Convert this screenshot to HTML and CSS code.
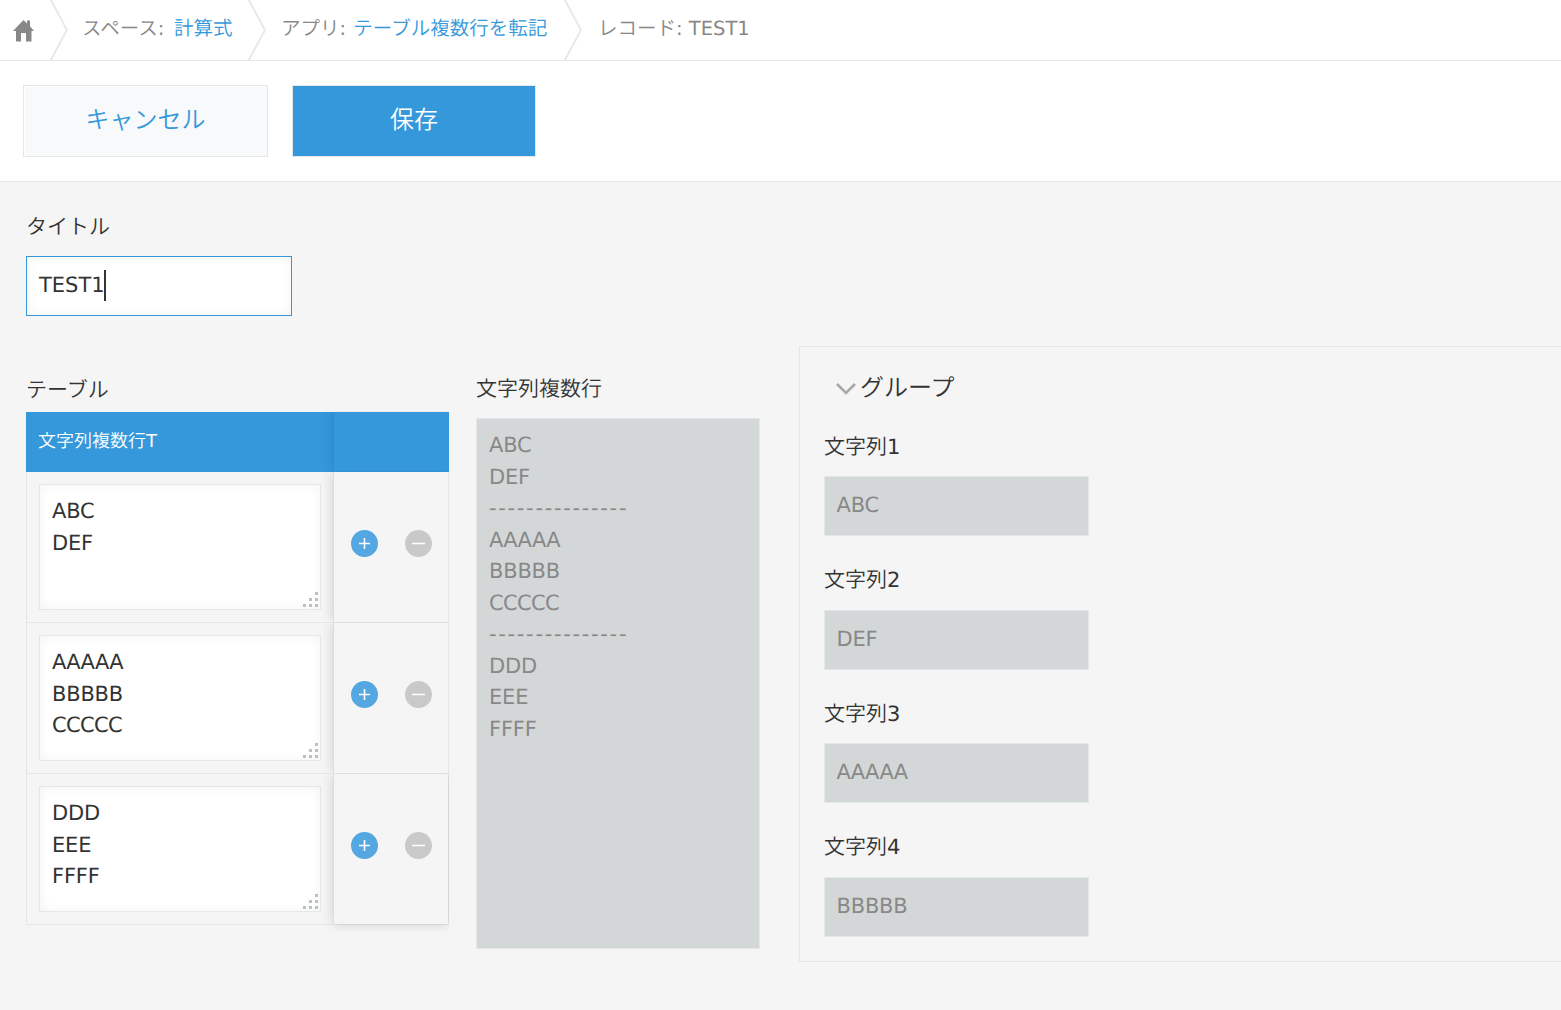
FILE: index.html
```html
<!DOCTYPE html>
<html lang="ja">
<head>
<meta charset="utf-8">
<title>レコード: TEST1</title>
<link rel="stylesheet" href="styles.css">
</head>
<body>
<svg class="defs" aria-hidden="true">
  <symbol id="sep" viewBox="0 0 20 60"><path d="M0.300 -1L17 30L0.300 61" fill="none" stroke="#e6eae9" stroke-width="2"/></symbol>
  <symbol id="plus" viewBox="0 0 28 28"><circle cx="13.500" cy="13.500" r="13.500" fill="#54a7e0"/><path d="M8 13.500h11M13.500 8v11" stroke="#fff" stroke-width="1.600"/></symbol>
  <symbol id="minus" viewBox="0 0 28 28"><circle cx="13.500" cy="13.500" r="13.500" fill="#c9c9c9"/><path d="M7 13.500h13" stroke="#fff" stroke-width="1.600"/></symbol>
  <symbol id="grip" viewBox="0 0 15 15"><path d="M12 0h3v3h-3zM6 6h3v3h-3zM12 6h3v3h-3zM0 12h3v3h-3zM6 12h3v3h-3zM12 12h3v3h-3z" fill="#b9c1c7"/></symbol>
</svg>
<nav class="crumbs">
  <svg class="home" viewBox="0 0 21 22"><path d="M10.500 0L14 3.400V0.500h3v5.800L21 11h-2.500v10.500H13V13H8v8.500H3V11H0z" fill="#888"/></svg>
  <svg class="sep"><use href="#sep"/></svg>
  <span class="crumb crumb-space">スペース<b>: </b><a>計算式</a></span>
  <svg class="sep"><use href="#sep"/></svg>
  <span class="crumb crumb-app">アプリ<b>: </b><a>テーブル複数行を転記</a></span>
  <svg class="sep"><use href="#sep"/></svg>
  <span class="crumb crumb-record">レコード<b>: TEST1</b></span>
</nav>
<header class="toolbar">
  <button class="btn btn-cancel">キャンセル</button>
  <button class="btn btn-save">保存</button>
</header>
<main class="record">
  <section class="field">
    <div class="label label-kana">タイトル</div>
    <div class="input input-focus">TEST1<i class="caret"></i></div>
  </section>
  <div class="columns">
    <section class="table-field">
      <div class="label label-kana">テーブル</div>
      <div class="table">
        <div class="head"><div class="cell-text">文字列複数行<b>T</b></div><div class="cell-ops"></div></div>
        <div class="row">
          <div class="cell-text"><div class="textarea">ABC
DEF<svg class="grip"><use href="#grip"/></svg></div></div>
          <div class="cell-ops"><svg><use href="#plus"/></svg><svg><use href="#minus"/></svg></div>
        </div>
        <div class="row">
          <div class="cell-text"><div class="textarea"><span class="tight">AAAAA</span>
BBBBB
<span class="tight">CCCCC</span><svg class="grip"><use href="#grip"/></svg></div></div>
          <div class="cell-ops"><svg><use href="#plus"/></svg><svg><use href="#minus"/></svg></div>
        </div>
        <div class="row">
          <div class="cell-text"><div class="textarea">DDD
EEE
FFFF<svg class="grip"><use href="#grip"/></svg></div></div>
          <div class="cell-ops"><svg><use href="#plus"/></svg><svg><use href="#minus"/></svg></div>
        </div>
      </div>
    </section>
    <section class="multi-field">
      <div class="label">文字列複数行</div>
      <div class="multi">ABC
DEF
<span class="rule">---------------</span>
<span class="tight">AAAAA</span>
BBBBB
<span class="tight">CCCCC</span>
<span class="rule">---------------</span>
DDD
EEE
FFFF</div>
    </section>
    <section class="group">
      <h2 class="group-title"><svg class="chevron" viewBox="0 0 20 14"><path d="M1 2L10 11L19 2" fill="none" stroke="#a8a8a8" stroke-width="2.600"/></svg>グループ</h2>
      <div class="group-field"><div class="label">文字列<b>1</b></div><div class="input input-disabled">ABC</div></div>
      <div class="group-field"><div class="label">文字列<b>2</b></div><div class="input input-disabled">DEF</div></div>
      <div class="group-field"><div class="label">文字列<b>3</b></div><div class="input input-disabled"><span class="tight">AAAAA</span></div></div>
      <div class="group-field"><div class="label">文字列<b>4</b></div><div class="input input-disabled">BBBBB</div></div>
    </section>
  </div>
</main>
</body>
</html>
```

FILE: styles.css
```css
* { box-sizing: border-box; }
body {
  margin: 0;
  height: 1010px;
  overflow: hidden;
  background: #f5f5f5;
  color: #333;
  font: 21px/31.5px "DejaVu Sans", "Noto Sans CJK JP", sans-serif;
  text-rendering: geometricPrecision;
}
svg { display: block; }
.defs { position: absolute; width: 0; height: 0; }
.label, .crumb, .btn, .group-title, .head { font-weight: 350; }
.label-kana { height: 31.500px; padding-top: 1px; }
b { font-weight: 400; }

.crumbs {
  display: flex;
  height: 61px;
  background: #fff;
  border-bottom: 1px solid #e3e7e8;
  color: #888;
  font-size: 19.5px;
}
.crumbs a { color: #3498db; }
.home { width: 21px; height: 22px; margin: 20px 16px 0 13px; }
.sep { width: 20px; height: 60px; flex: none; }
.crumb { line-height: 58px; white-space: nowrap; }
.crumb-space { width: 178px; padding-left: 12px; }
.crumb-space a { margin-left: 3.500px; }
.crumb-app { width: 296px; padding-left: 13px; }
.crumb-app a { margin-left: 1px; }
.crumb-record { padding-left: 14px; }

.toolbar {
  display: flex;
  gap: 24px;
  height: 121px;
  padding: 24px 23px;
  background: #fff;
  border-bottom: 1px solid #e3e7e8;
}
.btn {
  height: 72px;
  padding: 0 0 2px;
  border: 1px solid #e3e7e8;
  font-family: inherit;
  font-size: 24px;
  line-height: 36px;
}
.btn-cancel { width: 245px; background: #f7f9fa; color: #3498db; box-shadow: inset 1px 1px 1px #fff; }
.btn-save { width: 244px; background: #3498db; color: #fff; }

.record { padding: 29px 0 0 26px; }
.input {
  position: relative;
  display: flex;
  width: 265px;
  height: 60px;
  padding: 13px 11.500px 11px;
  border: 1px solid #e3e7e8;
}
.input-focus {
  width: 266px;
  margin-top: 13px;
  padding-left: 12px;
  background: #fff;
  border-color: #3498db;
  box-shadow: inset 0 0 12px #f3f3f3;
}
.input-disabled { margin-top: 13px; background: #d4d7d7; color: #888; }
.caret { width: 2px; height: 31px; margin: 0 0 0 -1px; background: #333; }

.columns { display: flex; margin-top: 30px; }
.table-field { width: 423px; padding-top: 28px; }
.table { margin-top: 6.500px; }
.head, .row { display: flex; }
.head { height: 60px; background: #3498db; color: #fff; font-size: 18px; }
.head .cell-text { padding: 0 12px; line-height: 60px; }
.cell-text { width: 308px; }
.cell-ops { width: 115px; box-shadow: 0 0 12px rgba(0, 0, 0, .16); clip-path: inset(0 0 0 -14px); }
.row { height: 151px; border: solid #e3e7e8; border-width: 0 1px 1px; }
.row .cell-text { width: 307px; padding: 12px; }
.row .cell-ops { display: flex; width: 115px; align-items: center; gap: 26px; padding: 0 0 6px 17px; border-left: 1px solid #dcdede; margin-left: -1px; }
.row:last-child .cell-ops { clip-path: inset(0 -1px -8px -14px); }
.cell-ops svg { width: 28px; height: 28px; }
.textarea {
  position: relative;
  width: 282px;
  height: 126px;
  padding: 11.500px 12px 10px;
  border: 1px solid #e3e7e8;
  background: #fff;
  white-space: pre;
  box-shadow: inset 0 0 12px #f3f3f3;
}
.textarea, .multi, .input-disabled { letter-spacing: -.2px; }
.tight { letter-spacing: -.65px; }
.grip { position: absolute; right: 2px; bottom: 2px; width: 15px; height: 15px; }

.multi-field { width: 284px; margin-left: 27px; padding-top: 28px; }
.multi {
  height: 531px;
  margin-top: 12.500px;
  padding: 11.500px 12px 10px;
  border: 1px solid #e3e7e8;
  background: #d4d7d7;
  color: #888;
  white-space: pre;
}
.rule { letter-spacing: 1.700px; }

.group {
  flex: 1;
  height: 616px;
  margin-left: 39px;
  padding: 24px;
  border: solid #e3e7e8;
  border-width: 1px 0 1px 1px;
}
.group-title { display: flex; height: 36px; margin: 0; padding: 0 0 0 12px; align-items: center; font-size: 24px; }
.chevron { width: 20px; height: 14px; margin: 1px 4px 0 0; }
.group-field { height: 133.500px; padding-top: 25px; }
```
